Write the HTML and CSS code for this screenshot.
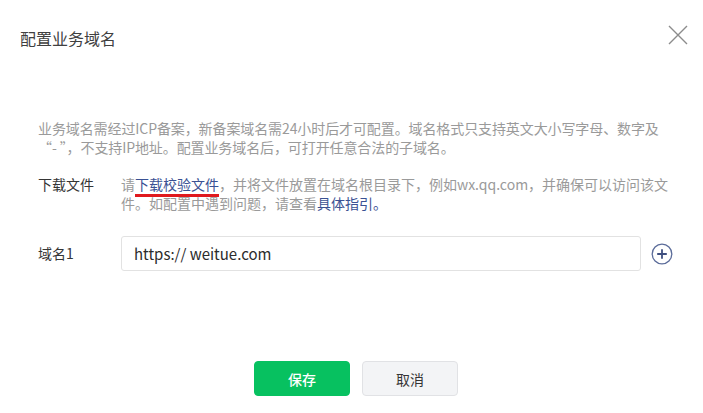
FILE: index.html
```html
<!DOCTYPE html>
<html lang="zh-CN">
<head>
  <meta charset="utf-8"/>
  <title>配置业务域名</title>
  <link rel="stylesheet" href="styles.css">
</head>
<body>
  <div class="dialog">
    <!-- En-tête -->
    <div class="dialog-head">
      <h2 class="dialog-title">配置业务域名</h2>
      <button class="dialog-close" aria-label="关闭">
        <svg width="20" height="20" viewBox="0 0 20 20">
          <path d="M1 1L19 19M19 1L1 19" stroke="#8c8c8c" stroke-width="1.4" fill="none"/>
        </svg>
      </button>
    </div>

    <!-- Corps -->
    <div class="dialog-body">
      <p class="tips">业务域名需经过ICP备案，新备案域名需24小时后才可配置。域名格式只支持英文大小写字母、数字及<br>“- ”，不支持IP地址。配置业务域名后，可打开任意合法的子域名。</p>

      <div class="form-row">
        <label class="form-label">下载文件</label>
        <div class="form-content desc">请<a href="#" class="link link-mark">下载校验文件</a>，并将文件放置在域名根目录下，例如wx.qq.com，并确保可以访问该文件。如配置中遇到问题，请查看<a href="#" class="link">具体指引。</a></div>
      </div>

      <div class="form-row row-input">
        <label class="form-label">域名1</label>
        <div class="form-content input-line">
          <input class="text-input" type="text" value="https:// weitue.com">
          <button class="add-btn" aria-label="添加">
            <svg width="22" height="22" viewBox="0 0 22 22">
              <circle cx="11" cy="11" r="9.8" stroke="#5b6c9a" stroke-width="1.3" fill="none"/>
              <path d="M11 6.2V15.8M6.2 11H15.8" stroke="#3f4f7f" stroke-width="1.8"/>
            </svg>
          </button>
        </div>
      </div>
    </div>

    <!-- Pied -->
    <div class="dialog-foot">
      <button class="btn btn-primary">保存</button>
      <button class="btn btn-default">取消</button>
    </div>
  </div>
</body>
</html>
```

FILE: styles.css
```css
/* -------- Base -------- */
* { box-sizing: border-box; }
html, body {
  margin: 0;
  padding: 0;
  background: #ffffff;
  font-family: "Noto Sans CJK SC", "Noto Sans", sans-serif;
  color: #353535;
}

/* -------- Dialogue -------- */
.dialog {
  width: 703px;
  height: 413px;
  display: flex;
  flex-direction: column;
}
.dialog-head {
  display: flex;
  align-items: center;
  justify-content: space-between;
  padding: 21px 15px 0 20px;
}
.dialog-title {
  margin: 0;
  padding-top: 6px;
  font-size: 16px;
  font-weight: 400;
  line-height: 22px;
  color: #404040;
}
.dialog-close {
  border: none;
  background: none;
  padding: 0;
  width: 20px;
  height: 20px;
  cursor: pointer;
}

/* -------- Corps -------- */
.dialog-body {
  padding: 70px 24px 0 38px;
  font-size: 14px;
}
.tips {
  margin: 0;
  color: #9a9a9a;
  line-height: 19px;
  letter-spacing: -0.1px;
}
.form-row {
  display: flex;
  margin-top: 18px;
  line-height: 19px;
}
.form-label {
  width: 83px;
  flex-shrink: 0;
  color: #353535;
}
.form-content { flex: 1; }
.desc { color: #9a9a9a; }
.link {
  color: #3a5193;
  text-decoration: none;
}
.link-mark {
  border-bottom: 3px solid #e0191e;
}

/* -------- Champ domaine -------- */
.row-input {
  margin-top: 23px;
  align-items: center;
}
.input-line {
  display: flex;
  align-items: center;
  gap: 10px;
}
.text-input {
  width: 520px;
  height: 35px;
  border: 1px solid #e2e2e2;
  border-radius: 3px;
  padding: 0 12px;
  font-family: inherit;
  font-size: 15px;
  color: #2c2c2c;
  outline: none;
}
.add-btn {
  border: none;
  background: none;
  padding: 0;
  width: 22px;
  height: 22px;
  cursor: pointer;
}

/* -------- Pied / boutons -------- */
.dialog-foot {
  margin-top: auto;
  display: flex;
  justify-content: center;
  gap: 12px;
  padding: 0 0 17px 9px;
}
.btn {
  width: 96px;
  height: 35px;
  border-radius: 4px;
  font-family: inherit;
  font-size: 14px;
  cursor: pointer;
}
.btn-primary {
  background: #07c160;
  border: 1px solid #07c160;
  color: #ffffff;
  font-weight: 500;
}
.btn-default {
  background: #f3f4f6;
  border: 1px solid #e1e2e5;
  color: #353535;
}
```
